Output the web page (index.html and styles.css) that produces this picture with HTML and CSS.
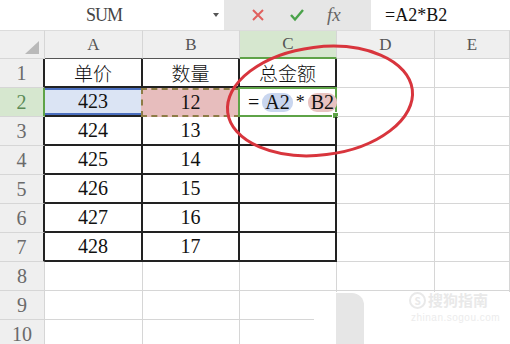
FILE: index.html
```html
<!DOCTYPE html>
<html lang="zh">
<head>
    <meta charset="UTF-8">
    <title>SUM</title>
    <link rel="stylesheet" href="styles.css">
</head>
<body>

<div class="formula-bar">
    <div class="name-box">
        <span class="name">SUM</span>
        <span class="drop"></span>
    </div>
    <div class="fx-zone">
        <svg class="icon" width="14" height="14" viewBox="0 0 14 14"><path d="M2 2 L12 12 M12 2 L2 12" stroke="#e0605e" stroke-width="2" fill="none"/></svg>
        <svg class="icon" width="16" height="14" viewBox="0 0 16 14"><path d="M2 7 L6 11.5 L14 2" stroke="#4aa24a" stroke-width="2.4" fill="none"/></svg>
        <span class="fx">fx</span>
    </div>
    <div class="formula-input">=A2*B2</div>
</div>

<div class="sheet">
    <div class="cell corner"><span class="tri"></span></div>
    <div class="cell hd t-top">A</div>
    <div class="cell hd t-top">B</div>
    <div class="cell hd sel-col">C</div>
    <div class="cell hd">D</div>
    <div class="cell hd">E</div>

    <div class="cell rh t-left">1</div>
    <div class="cell t cn">单价</div>
    <div class="cell t cn">数量</div>
    <div class="cell t cn">总金额</div>
    <div class="cell"></div>
    <div class="cell"></div>

    <div class="cell rh sel-row">2</div>
    <div class="cell t ref-a">423</div>
    <div class="cell t ref-b">12</div>
    <div class="cell t active">
        <span class="eq">=</span><span class="chip chip-a">A2</span><span class="op">*</span><span class="chip chip-b">B2</span><span class="caret"></span>
        <span class="handle"></span>
    </div>
    <div class="cell"></div>
    <div class="cell"></div>

    <div class="cell rh t-left">3</div>
    <div class="cell t">424</div>
    <div class="cell t">13</div>
    <div class="cell t"></div>
    <div class="cell"></div>
    <div class="cell"></div>

    <div class="cell rh t-left">4</div>
    <div class="cell t">425</div>
    <div class="cell t">14</div>
    <div class="cell t"></div>
    <div class="cell"></div>
    <div class="cell"></div>

    <div class="cell rh t-left">5</div>
    <div class="cell t">426</div>
    <div class="cell t">15</div>
    <div class="cell t"></div>
    <div class="cell"></div>
    <div class="cell"></div>

    <div class="cell rh t-left">6</div>
    <div class="cell t">427</div>
    <div class="cell t">16</div>
    <div class="cell t"></div>
    <div class="cell"></div>
    <div class="cell"></div>

    <div class="cell rh t-left">7</div>
    <div class="cell t">428</div>
    <div class="cell t">17</div>
    <div class="cell t"></div>
    <div class="cell"></div>
    <div class="cell"></div>

    <div class="cell rh">8</div>
    <div class="cell"></div>
    <div class="cell"></div>
    <div class="cell"></div>
    <div class="cell"></div>
    <div class="cell"></div>

    <div class="cell rh">9</div>
    <div class="cell"></div>
    <div class="cell"></div>
    <div class="cell"></div>
    <div class="cell"></div>
    <div class="cell"></div>

    <div class="cell rh">10</div>
    <div class="cell"></div>
    <div class="cell"></div>
    <div class="cell"></div>
    <div class="cell"></div>
    <div class="cell"></div>
</div>

<!-- red hand-drawn circle over C1:C2 -->
<svg class="mark" width="510" height="344" viewBox="0 0 510 344">
    <ellipse cx="320" cy="101" rx="93" ry="54" transform="rotate(-7 320 101)" fill="none" stroke="#d8353d" stroke-width="3"/>
</svg>

<div class="watermark">
    <div class="tab"></div>
    <div class="logo">
        <span class="s">S</span><span class="wm-text">搜狗指南</span>
    </div>
    <div class="wm-url">zhinan.sogou.com</div>
</div>

</body>
</html>
```

FILE: styles.css
```css
body, html {
    margin: 0;
    padding: 0;
    width: 510px;
    height: 344px;
    overflow: hidden;
    background-color: #fff;
    font-family: "Liberation Serif", "Noto Sans CJK SC", serif;
    color: #111;
}

/* formula bar */
.formula-bar {
    display: flex;
    height: 30px;
    background-color: #e6e6e6;
}

.name-box {
    width: 224px;
    background-color: #fff;
    display: flex;
    align-items: center;
    justify-content: center;
    position: relative;
}

.name {
    font-family: "Liberation Serif", serif;
    font-size: 18px;
    letter-spacing: -1px;
    color: #444;
    margin-left: -16px;
}

.drop {
    position: absolute;
    right: 5px;
    top: 13px;
    border-left: 3px solid transparent;
    border-right: 3px solid transparent;
    border-top: 4px solid #555;
}

.fx-zone {
    width: 147px;
    display: flex;
    align-items: center;
    padding-left: 27px;
    gap: 24px;
    box-sizing: border-box;
}

.fx {
    font-style: italic;
    font-size: 19px;
    color: #666;
    margin-left: -2px;
}

.formula-input {
    flex: 1;
    background-color: #fff;
    font-size: 18px;
    line-height: 30px;
    padding-left: 14px;
    color: #111;
}

/* grid */
.sheet {
    display: grid;
    grid-template-columns: 45px 98px 97px 97px 98px 75px;
    grid-auto-rows: 29px;
}

.cell {
    box-sizing: border-box;
    border-right: 1px solid #d6d6d6;
    border-bottom: 1px solid #d6d6d6;
    display: flex;
    align-items: center;
    justify-content: center;
    font-family: "Liberation Serif", "Noto Sans CJK SC", serif;
    font-size: 20px;
    position: relative;
}

.cn {
    font-family: "Noto Sans CJK SC", sans-serif;
    font-weight: 300;
    font-size: 19px;
}

.corner, .hd, .rh {
    background-color: #efefef;
    color: #666;
}

.corner {
    border-top: 1px solid #dcdcdc;
}

.tri {
    position: absolute;
    right: 5px;
    bottom: 4px;
    width: 0;
    height: 0;
    border-left: 14px solid transparent;
    border-bottom: 13px solid #b9b9b9;
}

.hd {
    font-size: 17px;
    color: #555;
    border-top: 1px solid #dcdcdc;
}

.rh {
    font-size: 20px;
    color: #6a6a6a;
}

.t-top {
    border-bottom: 1px solid #555;
}

.t-left {
    border-right: 2px solid #222;
}

.t {
    border-right: 2px solid #222;
    border-bottom: 2px solid #222;
}

.sel-col {
    background-color: #d6e7cf;
    border-bottom: 2px solid #5ea347;
}

.sel-row {
    background-color: #d6e7cf;
    border-right: 2px solid #5ea347;
    color: #5b8a55;
}

/* formula references */
.ref-a {
    background-color: #dbe4f4;
    box-shadow: inset 0 2px 0 #4b6fbf, inset 0 -2px 0 #4b6fbf;
}

.ref-b {
    background-color: #e7bdbd;
    border: 2px dashed #8d7c46;
    margin-left: -2px;
}

.active {
    justify-content: flex-start;
    padding-left: 8px;
    border: 2px solid #5ea347;
    margin-left: -2px;
    margin-top: -1px;
}

.eq {
    margin-right: 3px;
}

.chip {
    border-radius: 9px;
    padding: 0 3px;
    line-height: 19px;
}

.chip-a {
    background-color: #c9d6ef;
}

.chip-b {
    background-color: #e8c3c1;
}

.op {
    margin: 0 3px;
    font-size: 18px;
}

.caret {
    width: 1px;
    height: 20px;
    background-color: #222;
    margin-left: 3px;
}

.handle {
    position: absolute;
    right: -4px;
    bottom: -4px;
    width: 5px;
    height: 5px;
    background-color: #5ea347;
    border: 1px solid #fff;
}

.mark {
    position: absolute;
    left: 0;
    top: 0;
    pointer-events: none;
}

/* watermark */
.watermark {
    position: absolute;
    left: 314px;
    top: 292px;
    right: 0;
    bottom: 0;
    background-color: #fff;
}

.tab {
    position: absolute;
    left: 22px;
    top: 1px;
    width: 28px;
    bottom: 0;
    background-color: #e6e6e6;
    border-radius: 0 12px 0 0;
}

.logo {
    position: absolute;
    left: 95px;
    top: -1px;
    height: 18px;
    display: flex;
    align-items: center;
    color: #e9e9e9;
    font-family: "Noto Sans CJK SC", sans-serif;
    font-size: 15px;
    line-height: 18px;
    font-weight: bold;
}

.s {
    width: 13px;
    height: 13px;
    border: 2px solid #e9e9e9;
    border-radius: 50%;
    font-size: 10px;
    line-height: 13px;
    display: flex;
    align-items: center;
    justify-content: center;
    margin-right: 2px;
}

.wm-url {
    position: absolute;
    left: 97px;
    top: 20px;
    font-family: "Liberation Sans", sans-serif;
    font-size: 10px;
    line-height: 12px;
    color: #ececec;
    letter-spacing: 0.5px;
}
```
